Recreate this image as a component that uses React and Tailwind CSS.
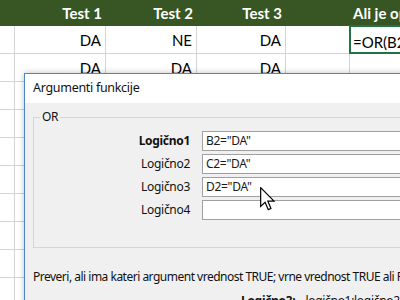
import React from 'react';

const cols = [
  { w: 'w-[15px]' },
  { w: 'w-[91px]' },
  { w: 'w-[91px]' },
  { w: 'w-[89px]' },
  { w: 'w-[64px]' },
  { w: 'w-[80px]' },
];

const headers = ['', 'Test 1', 'Test 2', 'Test 3', '', 'Ali je opravil'];
const rows = [
  ['', 'DA', 'NE', 'DA', '', ''],
  ['', 'DA', 'DA', 'DA', '', ''],
  ['', '', '', '', '', ''],
  ['', '', '', '', '', ''],
  ['', '', '', '', '', ''],
  ['', '', '', '', '', ''],
  ['', '', '', '', '', ''],
  ['', '', '', '', '', ''],
  ['', '', '', '', '', ''],
  ['', '', '', '', '', ''],
];

function Sheet() {
  return (
    <div className="font-['Lato','Liberation_Sans',sans-serif] text-[15px] text-black">
      {/* header row */}
      <div className="flex h-[26px] bg-[#375623] text-white font-bold">
        {headers.map((h, i) => (
          <div
            key={i}
            className={`${cols[i].w} shrink-0 flex items-center ${i === 5 ? 'justify-start pl-[3px] whitespace-nowrap' : 'justify-end pr-[4px]'}`}
          >
            {h}
          </div>
        ))}
      </div>
      {rows.map((r, ri) => (
        <div key={ri} className="flex h-[28px] border-b border-[#d4d4d4]">
          {r.map((c, ci) => (
            <div
              key={ci}
              className={`${cols[ci].w} shrink-0 flex items-center justify-end pr-[4px] pt-[2px] border-r border-[#d4d4d4] relative`}
            >
              {c}
              {ri === 0 && ci === 5 && (
                <div className="absolute left-[-1px] top-[-1px] w-[90px] h-[29px] border-2 border-[#217346] flex items-center pl-[2px] pt-[6px] whitespace-nowrap">
                  =OR(B2="DA";C2="DA";D2="DA")
                </div>
              )}
            </div>
          ))}
        </div>
      ))}
    </div>
  );
}

function ArgRow({ label, value, bold }) {
  return (
    <div className="flex items-center h-[23px]">
      <div className={`w-[168px] text-right pr-[12px] ${bold ? 'font-bold' : ''}`}>{label}</div>
      <div className="w-[230px] h-[20px] bg-white border border-[#a0a0a0] flex items-center pl-[3px] text-[#1a1a1a]">
        {value}
      </div>
    </div>
  );
}

function Dialog() {
  return (
    <div className="absolute left-[24px] top-[73px] w-[420px] h-[260px] border border-[#4a86c8] bg-[#f0f0f0] shadow-[0_0_6px_rgba(0,0,0,0.25)] font-['Noto_Sans','Open_Sans',sans-serif] text-[12px] tracking-[-0.3px] text-[#111]">
      <div className="h-[29px] bg-white flex items-center pl-[8px] text-[12.5px]">Argumenti funkcije</div>
      <div className="pl-[8px] pt-[14px]">
        <div className="relative border border-[#d5d5d5] h-[131px] w-[400px] pt-[11px]">
          <span className="absolute left-[6px] top-[-10px] bg-[#f0f0f0] px-[2px]">OR</span>
          <ArgRow label="Logično1" value={'B2="DA"'} bold />
          <ArgRow label="Logično2" value={'C2="DA"'} />
          <ArgRow label="Logično3" value={'D2="DA"'} />
          <ArgRow label="Logično4" value="" />
        </div>
        <div className="mt-[20px] whitespace-nowrap tracking-[-0.5px]">
          Preveri, ali ima kateri argument vrednost TRUE; vrne vrednost TRUE ali FALSE.
        </div>
        <div className="mt-[6px] pl-[208px] whitespace-nowrap">
          <span className="font-bold">Logično3:</span>
          <span className="ml-[10px]">logično1;logično2;... je od 1 do 255 pogojev</span>
        </div>
      </div>
    </div>
  );
}

function Cursor() {
  return (
    <svg className="absolute left-[260px] top-[187px]" width="16" height="24" viewBox="0 0 12 18">
      <path
        d="M0.5 0.5 L0.5 14.5 L3.8 11.4 L6.2 17 L8.2 16.1 L5.9 10.6 L10.5 10.6 Z"
        fill="white"
        stroke="black"
        strokeWidth="0.9"
        strokeLinejoin="miter"
      />
    </svg>
  );
}

export default function App() {
  return (
    <div className="relative w-[400px] h-[300px] overflow-hidden bg-white">
      <Sheet />
      <Dialog />
      <Cursor />
    </div>
  );
}
